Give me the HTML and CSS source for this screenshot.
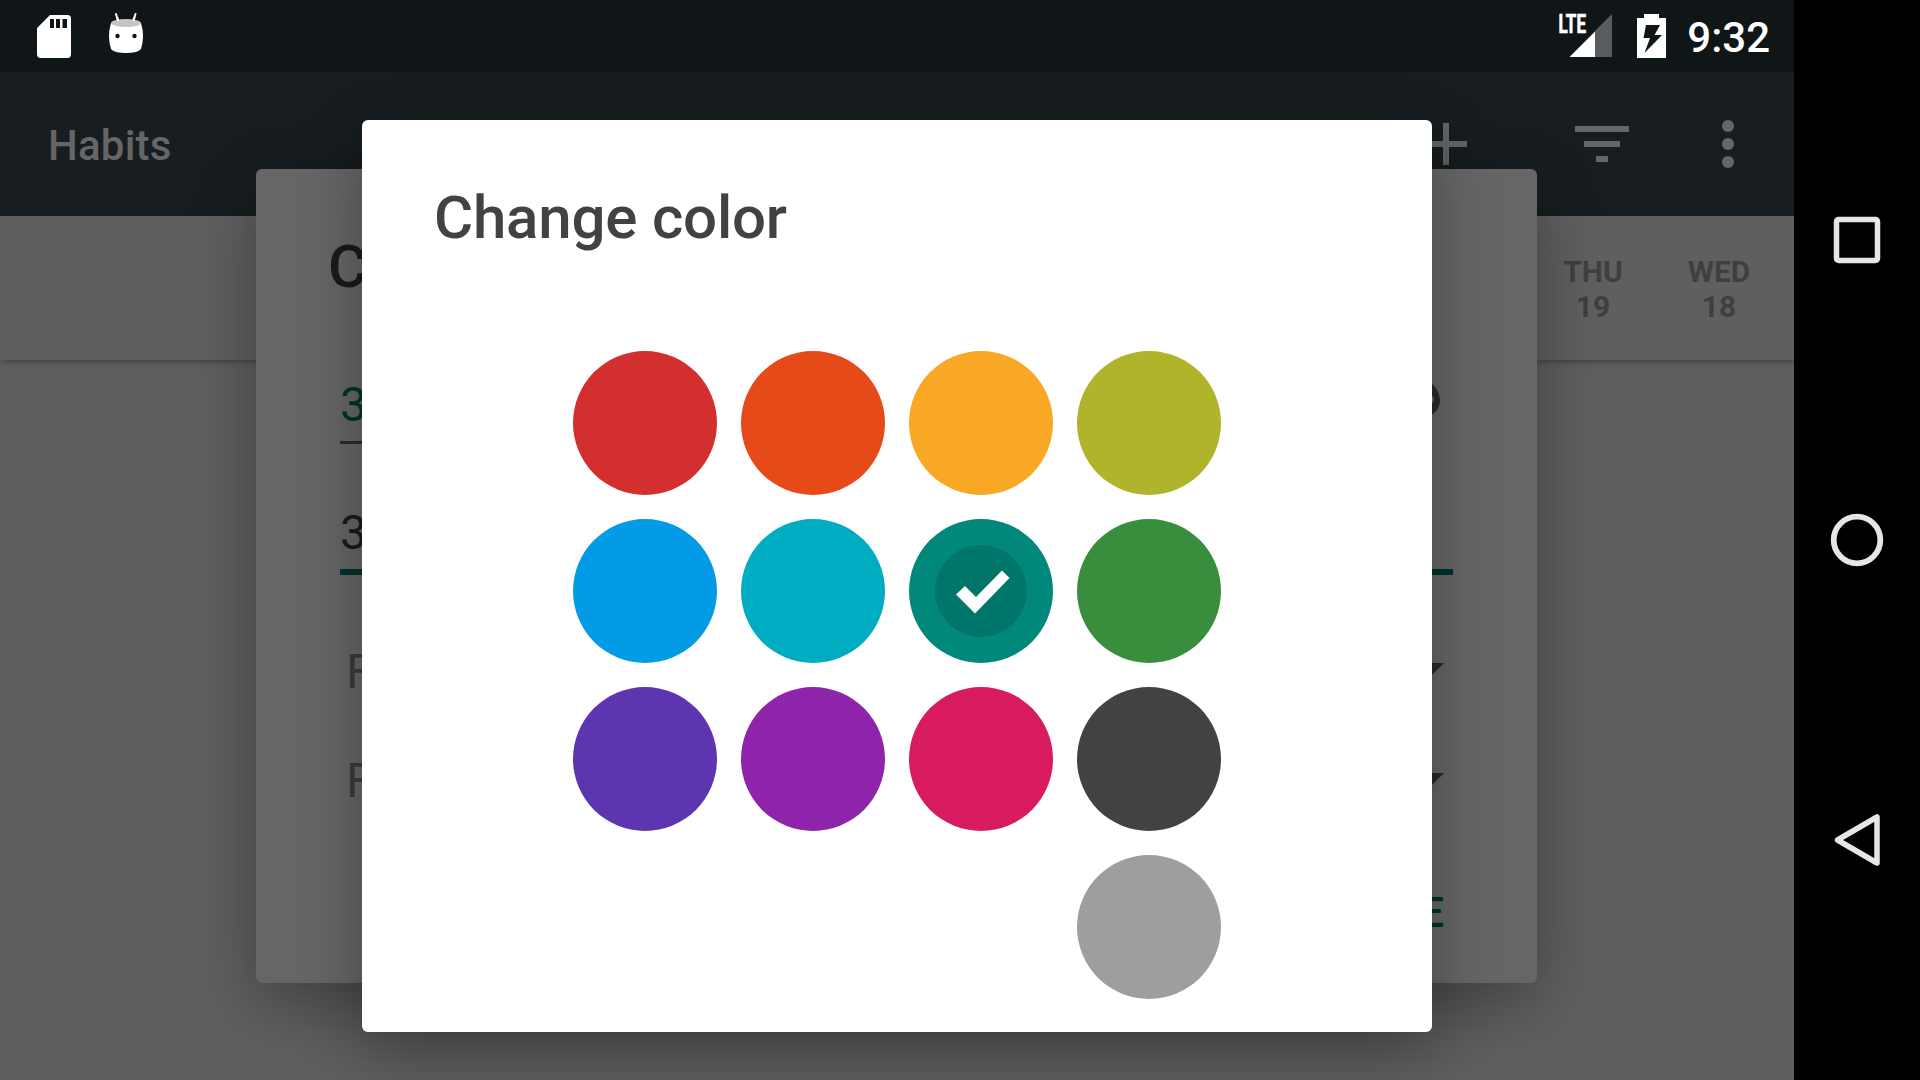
FILE: index.html
```html
<!DOCTYPE html>
<html lang="en">
<head>
<meta charset="utf-8">
<title>Habits</title>
<link rel="stylesheet" href="styles.css">
</head>
<body>
<div class="device">
  <div class="app">
    <header class="status">
      <div class="status-side">
        <svg class="sd" width="34" height="43" viewBox="0 0 34 43"><path fill="#fff" fill-rule="evenodd" d="M13 0H30.5Q34 0 34 3.500V39Q34 43 30.500 43H3.500Q0 43 0 39V13ZM13 4V13H17V4ZM19 4V13H23V4ZM25.500 4V13H30V4Z"/></svg>
        <svg class="droid" width="36" height="42" viewBox="0 0 36 42"><path stroke="#fff" stroke-width="2" stroke-linecap="round" d="M8 2L10 9M27.500 2L25.500 9"/><path fill="#fff" d="M3 11H33Q37 24 33 37Q30 41 18 41Q6 41 3 37Q-1 24 3 11Z"/><ellipse cx="18" cy="11" rx="15" ry="4" fill="#c4c4c4"/><circle cx="9.500" cy="24" r="2.200" fill="#101618"/><circle cx="26.500" cy="24" r="2.200" fill="#101618"/><path stroke="#fff" stroke-width="2" stroke-linecap="round" d="M9.500 6L10 8.500M26 6L25.500 8.500"/></svg>
      </div>
      <div class="status-side">
        <svg class="signal" width="54" height="44" viewBox="0 0 54 44"><path fill="#585c5e" d="M53 0V43H36V17Z"/><path fill="#fff" d="M10.500 43L36 17.500V43Z"/><text class="lte" x="-.5" y="19.200" textLength="27.500" lengthAdjust="spacingAndGlyphs">LTE</text></svg>
        <svg class="battery" width="29" height="44" viewBox="0 0 29 44"><path fill="#fff" d="M7 0H22V4H29V44H0V4H7Z"/><path fill="#101618" d="M9 11H23L17.500 21H25L7.500 39L13 24H6.500Z"/></svg>
        <span class="clock">9:32</span>
      </div>
    </header>
    <div class="toolbar">
      <span class="app-title">Habits</span>
      <div class="actions">
        <svg width="42" height="42" viewBox="0 0 42 42"><path stroke="#666" stroke-width="6" d="M0 21H42M21 0V42"/></svg>
        <svg class="filter" width="54" height="36" viewBox="0 0 54 36"><path fill="#666" d="M0 0H54V6H0ZM9 15H45V21H9ZM21 30H33V36H21Z"/></svg>
        <svg class="more" width="12" height="48" viewBox="0 0 12 48"><g fill="#666"><circle cx="6" cy="6" r="6"/><circle cx="6" cy="24" r="6"/><circle cx="6" cy="42" r="6"/></g></svg>
      </div>
    </div>
    <div class="days">
      <div class="day">THU<br>19</div>
      <div class="day">WED<br>18</div>
    </div>
    <main class="list"></main>

    <section class="dialog edit-dialog">
      <div class="edit-title">C</div>
      <div class="name">
        <div class="field name-row">3</div>
        <svg class="palette" width="72" height="72" viewBox="0 0 24 24"><path fill="#2b2b2b" d="M12 3c-4.970 0-9 4.030-9 9s4.030 9 9 9c.83 0 1.500-.67 1.500-1.500 0-.39-.15-.74-.39-1.010-.23-.26-.38-.61-.38-.99 0-.83.67-1.500 1.500-1.500H16c2.760 0 5-2.240 5-5 0-4.420-4.030-8-9-8zm5.500 9c-.83 0-1.500-.67-1.500-1.500S16.670 9 17.500 9s1.500.67 1.500 1.500-.67 1.500-1.500 1.500z"/></svg>
      </div>
      <div class="field question-row">3</div>
      <div class="select"><span>F</span><i class="caret"></i></div>
      <div class="select"><span>F</span><i class="caret"></i></div>
      <div class="save">E</div>
    </section>

    <section class="dialog color-dialog">
      <h1 class="color-title">Change color</h1>
      <div class="swatches">
        <i class="swatch red"></i><i class="swatch orange"></i><i class="swatch amber"></i><i class="swatch lime"></i>
        <i class="swatch blue"></i><i class="swatch cyan"></i><i class="swatch teal"><svg width="92" height="92" viewBox="0 0 92 92"><circle cx="46" cy="46" r="46" fill="#00766a"/><path fill="#fff" d="M21 49.500L30 41L41 52L67 25.500L74.500 33L40 68.500Z"/></svg></i><i class="swatch green"></i>
        <i class="swatch indigo"></i><i class="swatch purple"></i><i class="swatch pink"></i><i class="swatch dark"></i>
        <i class="swatch grey"></i>
      </div>
    </section>
  </div>
  <nav class="nav">
    <div><svg width="54" height="54" viewBox="0 0 54 54"><rect x="6.500" y="6.500" width="41" height="41" rx="2" fill="none" stroke="#e6e6e6" stroke-width="5.500"/></svg></div>
    <div><svg width="54" height="54" viewBox="0 0 54 54"><circle cx="27" cy="27" r="23.300" fill="none" stroke="#e6e6e6" stroke-width="5.800"/></svg></div>
    <div><svg width="54" height="54" viewBox="0 0 54 54"><path fill="none" stroke="#e6e6e6" stroke-width="5.500" stroke-linejoin="round" d="M47 4V50L7.500 27Z"/></svg></div>
  </nav>
</div>
</body>
</html>
```
FILE: styles.css
```css
* { box-sizing: border-box; }
body { margin: 0; background: #000; font-family: Roboto, sans-serif; overflow: hidden; }
svg { display: block; flex: none; overflow: visible; }

.device { display: flex; width: 1920px; height: 1080px; }
.app { position: relative; display: flex; flex-direction: column; width: 1794px; overflow: hidden; background: #5f5f5f; }

.status { display: flex; justify-content: space-between; height: 72px; padding: 0 24px 0 37px; background: #101618; }
.status-side { display: flex; align-items: flex-start; }
.sd { margin-top: 14.500px; }
.droid { margin: 12px 0 0 37px; }
.signal { margin-top: 14px; }
.battery { margin: 14px 0 0 24px; }
.lte { font: 700 25px Roboto, sans-serif; fill: #fff; stroke: #fff; stroke-width: .6px; }
.clock { margin-left: 21px; font-weight: 500; font-size: 42px; line-height: 76px; color: #fff; }

.toolbar { display: flex; align-items: center; justify-content: space-between; height: 144px; padding: 0 60px 0 48px; background: #171d20; }
.app-title { font-weight: 500; font-size: 42px; line-height: 48px; padding-top: 4px; letter-spacing: .2px; color: #666; }
.actions { display: flex; align-items: center; }
.filter { margin-left: 108px; }
.more { margin-left: 93px; }

.days { display: flex; justify-content: flex-end; height: 144px; padding: 38px 12px 0 0; background: #5f5f5f; box-shadow: 0 2px 6px rgba(0, 0, 0, .3); z-index: 1; }
.day { width: 126px; text-align: center; font-weight: 700; font-size: 30px; line-height: 35px; color: #3f3f3f; }
.list { flex: 1; background: #5f5f5f; }

.dialog { position: absolute; z-index: 2; border-radius: 6px; box-shadow: 0 20px 66px rgba(0, 0, 0, .33); }

.edit-dialog { left: 256px; top: 169px; width: 1281px; height: 814px; padding: 63px 84px 0; background: #666; }
.edit-title { margin-left: -12px; height: 134px; font-weight: 500; font-size: 60px; line-height: 70px; color: #1a1a1a; }
.field { font-size: 48px; line-height: 56px; }
.name { display: flex; align-items: flex-start; gap: 18px; height: 78px; }
.name-row { width: 1019px; height: 78px; padding-top: 11px; border-bottom: 3px solid #2b2b2b; color: #00332d; }
.palette { margin-top: 2px; }
.question-row { width: 1113px; height: 131px; padding-top: 61px; border-bottom: 6px solid #00332d; color: #1a1a1a; }
.select { display: flex; align-items: flex-start; justify-content: space-between; height: 109px; padding: 0 9px 0 6px; font-size: 48px; line-height: 56px; color: #3b3b3b; }
.question-row + .select { margin-top: 69px; }
.caret { width: 30px; height: 15px; margin-top: 19px; background: #292929; clip-path: polygon(0 0, 100% 0, 50% 100%); }
.select + .select .caret { margin-top: 20px; }
.save { margin-top: 27px; padding-right: 9px; text-align: right; font-weight: 500; font-size: 42px; line-height: 48px; color: #00332d; }

.color-dialog { left: 362px; top: 120px; width: 1070px; height: 912px; padding: 63px 72px 0; background: #fff; z-index: 3; }
.color-title { margin: 0; height: 168px; font-weight: 500; font-size: 60px; line-height: 70px; letter-spacing: -.2px; color: #424242; }
.swatches { display: grid; grid-template-columns: repeat(4, 144px); gap: 24px; margin-left: 139px; }
.swatch { display: grid; place-items: center; height: 144px; border-radius: 50%; }
.red { background: #d32f2f; }
.orange { background: #e64a19; }
.amber { background: #f9a825; }
.lime { background: #afb42b; }
.blue { background: #039be5; }
.cyan { background: #00acc1; }
.teal { background: #00897b; }
.green { background: #388e3c; }
.indigo { background: #5e35b1; }
.purple { background: #8e24aa; }
.pink { background: #d81b60; }
.dark { background: #424242; }
.grey { background: #9e9e9e; grid-column: 4; }

.nav { display: flex; flex-direction: column; align-items: center; gap: 246px; width: 126px; padding-top: 213px; background: #000; }
```
